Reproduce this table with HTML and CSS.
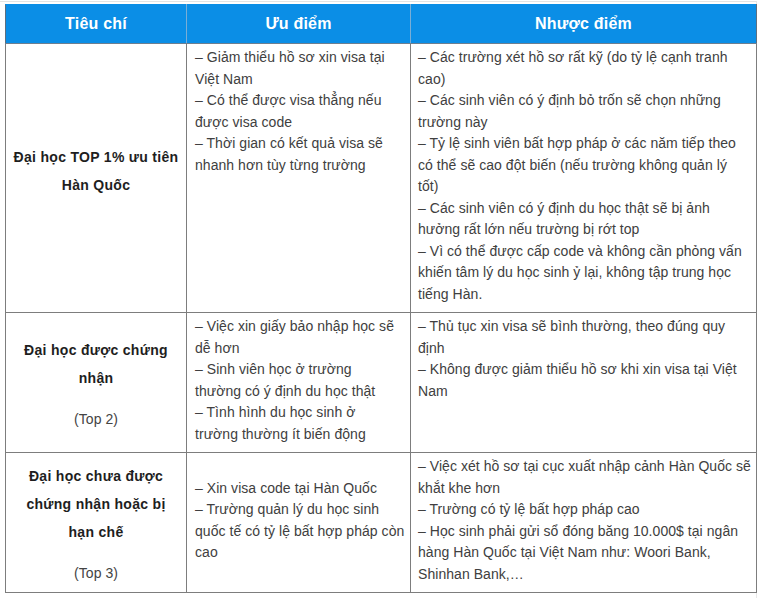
FILE: index.html
```html
<!DOCTYPE html>
<html lang="vi">
<head>
<meta charset="utf-8">
<title>So sánh</title>
<link rel="stylesheet" href="styles.css">
</head>
<body>
<div class="frame">
<table class="cmp">
  <colgroup>
    <col class="c1"><col class="c2"><col class="c3">
  </colgroup>
  <thead>
    <tr><th>Tiêu chí</th><th>Ưu điểm</th><th>Nhược điểm</th></tr>
  </thead>
  <tbody>
    <tr>
      <td class="crit"><div class="crit-in lift"><strong>Đại học TOP 1% ưu tiên<br>Hàn Quốc</strong></div></td>
      <td>– Giảm thiểu hồ sơ xin visa tại<br>Việt Nam<br>– Có thể được visa thẳng nếu<br>được visa code<br>– Thời gian có kết quả visa sẽ<br>nhanh hơn tùy từng trường</td>
      <td>– Các trường xét hồ sơ rất kỹ (do tỷ lệ cạnh tranh<br>cao)<br>– Các sinh viên có ý định bỏ trốn sẽ chọn những<br>trường này<br>– Tỷ lệ sinh viên bất hợp pháp ở các năm tiếp theo<br>có thể sẽ cao đột biến (nếu trường không quản lý<br>tốt)<br>– Các sinh viên có ý định du học thật sẽ bị ảnh<br>hưởng rất lớn nếu trường bị rớt top<br>– Vì có thể được cấp code và không cần phỏng vấn<br>khiến tâm lý du học sinh ỷ lại, không tập trung học<br>tiếng Hàn.</td>
    </tr>
    <tr>
      <td class="crit"><div class="crit-in"><strong>Đại học được chứng<br>nhận</strong><p class="top">(Top 2)</p></div></td>
      <td>– Việc xin giấy bảo nhập học sẽ<br>dễ hơn<br>– Sinh viên học ở trường<br>thường có ý định du học thật<br>– Tình hình du học sinh ở<br>trường thường ít biến động</td>
      <td>– Thủ tục xin visa sẽ bình thường, theo đúng quy<br>định<br>– Không được giảm thiểu hồ sơ khi xin visa tại Việt<br>Nam</td>
    </tr>
    <tr>
      <td class="crit"><div class="crit-in"><strong>Đại học chưa được<br>chứng nhận hoặc bị<br>hạn chế</strong><p class="top">(Top 3)</p></div></td>
      <td class="mid">– Xin visa code tại Hàn Quốc<br>– Trường quản lý du học sinh<br>quốc tế có tỷ lệ bất hợp pháp còn<br>cao</td>
      <td>– Việc xét hồ sơ tại cục xuất nhập cảnh Hàn Quốc sẽ<br>khắt khe hơn<br>– Trường có tỷ lệ bất hợp pháp cao<br>– Học sinh phải gửi sổ đóng băng 10.000$ tại ngân<br>hàng Hàn Quốc tại Việt Nam như: Woori Bank,<br>Shinhan Bank,…</td>
    </tr>
  </tbody>
</table>
</div>
</body>
</html>
```
FILE: styles.css
```css
html, body {
  margin: 0;
  padding: 0;
  background: #fff;
}
.frame {
  width: 757px;
  height: 597px;
  margin-top: 1px;
  border-top: 1px solid #e4e4e4;
  border-right: 1px solid #e8e8e8;
  box-sizing: border-box;
  padding: 2px 0 0 5px;
}
.cmp {
  border-collapse: collapse;
  table-layout: fixed;
  width: 751px;
  font-family: "Liberation Sans", Arial, sans-serif;
  font-size: 14px;
  letter-spacing: 0.05px;
  color: #404040;
}
.c1 { width: 181px; }
.c2 { width: 224px; }
.c3 { width: 346px; }
.cmp th {
  background: #0b8ee6;
  color: #fff;
  font-weight: bold;
  font-size: 16px;
  letter-spacing: 0.2px;
  height: 38px;
  padding: 0;
  text-align: center;
  vertical-align: middle;
  border: 1px solid #7aaed6;
  border-top-color: #0b8ee6;
  border-bottom: 1px solid #6d7f90;
}
.cmp th:first-child { border-left: 1px solid #5d6f80; }
.cmp th:last-child { border-right: 1px solid #5d6f80; }
.cmp td {
  border: 1px solid #7d7d7d;
  padding: 3px 4px 7px 8px;
  line-height: 21.5px;
  vertical-align: top;
  white-space: nowrap;
}
.cmp td:last-child { padding-left: 7px; }
.cmp td.crit {
  vertical-align: middle;
  text-align: center;
  padding: 7px 4px 3px 4px;
  color: #1e1e1e;
}
.cmp td.mid { vertical-align: middle; }
.crit-in strong {
  display: block;
  line-height: 28px;
  letter-spacing: 0.3px;
}
.crit-in.lift { padding-bottom: 18px; }
.top {
  margin: 13px 0 0;
  line-height: 28px;
  color: #444;
  font-weight: normal;
}
```
